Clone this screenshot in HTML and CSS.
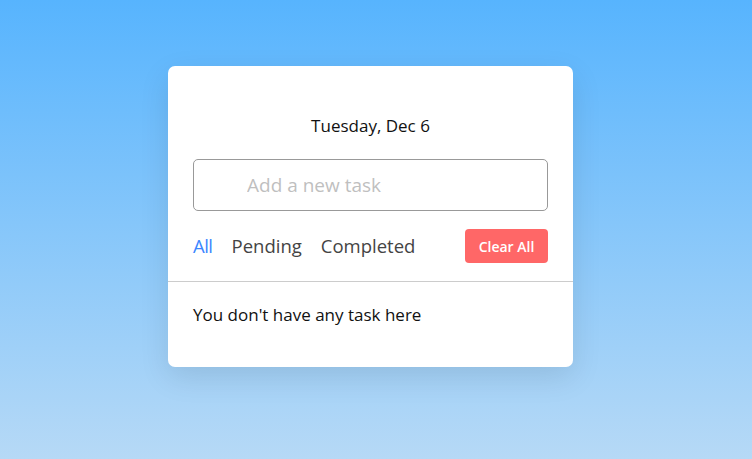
FILE: index.html
```html
<!DOCTYPE html>
<html lang="en">
<head>
<meta charset="utf-8">
<title>Todo</title>
<link rel="stylesheet" href="styles.css">
</head>
<body>
  <main class="page">
    <section class="card">
      <div class="date">Tuesday, Dec 6</div>
      <div class="task-input">
        <input type="text" placeholder="Add a new task">
      </div>
      <div class="controls">
        <div class="filters">
          <span class="filter active">All</span>
          <span class="filter">Pending</span>
          <span class="filter">Completed</span>
        </div>
        <button class="clear-btn">Clear All</button>
      </div>
      <div class="task-box">
        <p class="empty">You don't have any task here</p>
      </div>
    </section>
  </main>
</body>
</html>
```
FILE: styles.css
```css
* { box-sizing: border-box; margin: 0; padding: 0; }
html, body { height: 100%; }
body {
  font-family: "Open Sans", "DejaVu Sans", sans-serif;
  background: linear-gradient(to bottom, #57b4fe 0%, #b6d9f6 100%);
  overflow: hidden;
}
.page {
  display: flex;
  justify-content: center;
  padding: 66px 11px 0 0;
}
.card {
  width: 405px;
  background: #fff;
  border-radius: 7px;
  box-shadow: 0 10px 30px rgba(0, 0, 0, 0.1);
}
.date {
  text-align: center;
  font-size: 17px;
  color: #111;
  padding-top: 49px;
  line-height: 22px;
}
.task-input {
  padding: 22px 25px 0;
}
.task-input input {
  width: 100%;
  height: 52px;
  border: 1px solid #999;
  border-radius: 5px;
  padding: 0 20px 0 53px;
  font-family: inherit;
  font-size: 19px;
  outline: none;
  color: #333;
}
.task-input input::placeholder { color: #bfbfbf; }
.controls {
  display: flex;
  justify-content: space-between;
  align-items: center;
  padding: 18px 25px 18px;
  border-bottom: 1px solid #ccc;
}
.filters { display: flex; gap: 19px; }
.filter {
  font-size: 18.5px;
  color: #444;
  line-height: 24px;
}
.filter.active { color: #3c87ff; letter-spacing: -0.5px; }
.clear-btn {
  width: 83px;
  height: 34px;
  border: none;
  border-radius: 4px;
  background: #ff6767;
  color: #fff;
  font-family: inherit;
  font-size: 14px;
  font-weight: 600;
}
.task-box { padding: 21px 25px 41px; }
.empty {
  font-size: 17px;
  color: #111;
  line-height: 23px;
}
```
